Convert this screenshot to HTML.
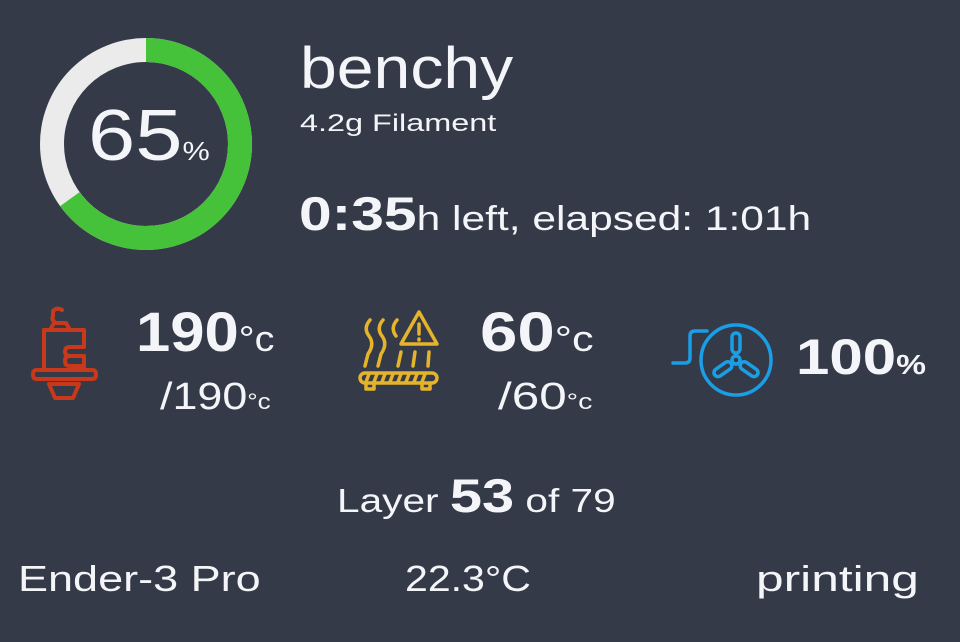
<!DOCTYPE html>
<html><head><style>
body{margin:0;width:960px;height:642px;background:#353a48;overflow:hidden;font-family:"Liberation Sans",sans-serif;color:#f4f5f9;position:relative}
.a{position:absolute;white-space:nowrap;transform-origin:0 0}
</style></head><body>
<svg class="a" style="left:0;top:0" width="960" height="642">
<circle cx="146" cy="144" r="94" fill="none" stroke="#ebebeb" stroke-width="24"/>
<circle cx="146" cy="144" r="94" fill="none" stroke="#45c13a" stroke-width="24" stroke-dasharray="383.9 1000" transform="rotate(-90 146 144)"/>
<g fill="none" stroke="#c8391b" stroke-width="4" stroke-linecap="round" stroke-linejoin="round">
<path d="M62 310 q-5 -3 -9 1 v5 q-2 4 3 7"/>
<path d="M54 323 h12 l4 7 h-20 z"/>
<path d="M44 330 h40 v17 h-14 q-5 0 -5 4.5 t5 4.5 h14 v14"/>
<path d="M44 330 v40 M84 356 h0 M70 356 q-5 0 -5 5 t5 5 h14"/>
<path d="M37 370 h55 q4 0 4 4.5 t-4 4.5 h-55 q-4 0 -4 -4.5 t4 -4.5z"/>
<path d="M49 384 h30 l-6 14 h-18 z"/>
</g>
<g fill="none" stroke="#e6b42a" stroke-width="3.5" stroke-linecap="round" stroke-linejoin="round">
<path d="M370 320 q-7 8 -1 16 q6 8 -1 18 l-3 12"/>
<path d="M383 320 q-7 8 -1 16 q6 8 -1 18 l-3 12"/>
<path d="M397 320 q-7 8 -1 16"/>
<path d="M419 312 l-18 32 h36 z"/><path d="M419 324 v10 M419 339 v1"/>
<path d="M401 352 l-3 14 M415 352 l-2 14 M429 352 l-1 14"/>
<rect x="360" y="373" width="77" height="10" rx="5"/>
<path d="M369 374 l-3 8 M377 374 l-3 8 M385 374 l-3 8 M393 374 l-3 8 M401 374 l-3 8 M409 374 l-3 8 M417 374 l-3 8 M425 374 l-3 8"/>
<path d="M366 383 v6 h8 v-6 M422 383 v6 h8 v-6"/>
</g>
<g fill="none" stroke="#1a9ee6" stroke-width="3.5" stroke-linecap="round">
<path d="M673 363 h12 q5 0 5 -5 v-22 q0 -5 5 -5 h12"/>
<circle cx="736" cy="360" r="35"/>
<rect x="732" y="333" width="8" height="20" rx="4"/>
<circle cx="736" cy="360" r="4"/>
<rect x="732" y="366" width="8" height="20" rx="4" transform="rotate(55 736 360)"/>
<rect x="732" y="366" width="8" height="20" rx="4" transform="rotate(-55 736 360)"/>
</g>
</svg>
<div class="a" style="left:88px;top:100px;font-size:72px;line-height:1;transform:scaleX(1.18)">65<span style="font-size:26px">%</span></div>
<div class="a" style="left:300px;top:40px;font-size:58px;line-height:1;transform:scaleX(1.14)">benchy</div>
<div class="a" style="left:300px;top:110px;font-size:24px;transform:scaleX(1.35)">4.2g Filament</div>
<div class="a" style="left:299px;top:186px;font-size:34px;transform:scaleX(1.25)"><b style="font-size:47px">0:35</b>h left, elapsed: 1:01h</div>
<div class="a" style="left:136px;top:304px;font-size:56px;font-weight:bold;line-height:1;transform:scaleX(1.1)">190<span style="font-size:36px;font-weight:normal">°c</span></div>
<div class="a" style="left:160px;top:378px;font-size:38px;line-height:1;transform:scaleX(1.18)">/190<span style="font-size:22px">°c</span></div>
<div class="a" style="left:480px;top:304px;font-size:56px;font-weight:bold;line-height:1;transform:scaleX(1.2)">60<span style="font-size:36px;font-weight:normal">°c</span></div>
<div class="a" style="left:498px;top:378px;font-size:38px;line-height:1;transform:scaleX(1.3)">/60<span style="font-size:22px">°c</span></div>
<div class="a" style="left:796px;top:332px;font-size:50px;font-weight:bold;line-height:1;transform:scaleX(1.2)">100<span style="font-size:28px">%</span></div>
<div class="a" style="left:337px;top:468px;font-size:33px;line-height:1.2;transform:scaleX(1.23)">Layer <b style="font-size:47px">53</b> of 79</div>
<div class="a" style="left:18px;top:558px;font-size:36px;transform:scaleX(1.25)">Ender-3 Pro</div>
<div class="a" style="left:405px;top:558px;font-size:36px;transform:scaleX(1.14)">22.3°C</div>
<div class="a" style="left:756px;top:558px;font-size:36px;transform:scaleX(1.38)">printing</div>
</body></html>
